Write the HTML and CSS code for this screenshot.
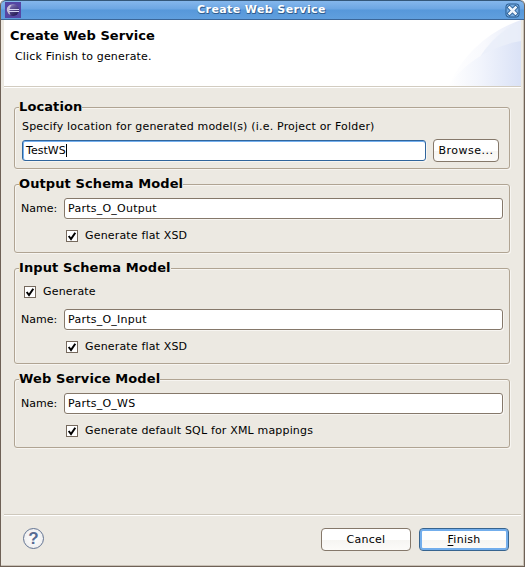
FILE: index.html
```html
<!DOCTYPE html>
<html lang="en">
<head>
<meta charset="utf-8">
<title>Create Web Service</title>
<link rel="stylesheet" href="styles.css">
</head>
<body>
<div class="window">
  <div class="titlebar">
    <svg class="app-icon" width="16" height="16" viewBox="0 0 16 16">
      <defs><linearGradient id="orb" x1="0" y1="0" x2="0.6" y2="1"><stop offset="0" stop-color="#bcb5dc"/><stop offset=".4" stop-color="#65589e"/><stop offset="1" stop-color="#292057"/></linearGradient></defs>
      <rect width="16" height="16" fill="#5546a4"/>
      <circle cx="8" cy="8" r="6" fill="url(#orb)"/>
      <path d="M5 3Q1 5 2 9Q3 12 5.5 13Q3 8 6.5 3Z" fill="#c9bfd6"/>
      <path d="M4 7.5h10M4 9.5h10" stroke="#d5d5f2"/>
    </svg>
    <span class="title">Create Web Service</span>
    <svg class="close" width="15" height="15" viewBox="0 0 15 15">
      <rect x="1" y="1" width="13" height="13" rx="2.5" fill="#76ace2" stroke="#26588d"/>
      <path d="M4.5 4.5l6 6m0-6l-6 6" stroke="#285b91" stroke-width="4.2" stroke-linecap="square"/>
      <path d="M4.5 4.5l6 6m0-6l-6 6" stroke="#eef5fc" stroke-width="2.5" stroke-linecap="square"/>
    </svg>
  </div>
  <div class="header">
    <h1>Create Web Service</h1>
    <p>Click Finish to generate.</p>
    <svg class="swoosh" width="75" height="66" viewBox="0 0 75 66">
      <defs>
        <linearGradient id="s1"><stop offset="0" stop-color="#fff"/><stop offset=".5" stop-color="#f8f9fd"/><stop offset="1" stop-color="#e6ebf9"/></linearGradient>
        <linearGradient id="s2"><stop offset="0" stop-color="#fff"/><stop offset=".45" stop-color="#f1f4fc"/><stop offset="1" stop-color="#dae2f6"/></linearGradient>
      </defs>
      <path d="M2 66Q26 17 75 0V66Z" fill="url(#s1)"/>
      <path d="M32 40Q48 13 75 1V22Q52 26 32 40Z" fill="#e8eef9" fill-opacity=".8"/>
      <path d="M2 66Q29 29 75 21V66Z" fill="url(#s2)"/>
    </svg>
  </div>
  <div class="body">
    <section class="group location">
      <h2>Location</h2>
      <p class="hint">Specify location for generated model(s) (i.e. Project or Folder)</p>
      <div class="picker"><div class="field focused"><span>TestWS</span><i class="caret"></i></div><div class="button browse">Browse...</div></div>
    </section>
    <section class="group output">
      <h2>Output Schema Model</h2>
      <div class="row"><label>Name:</label><div class="field">Parts_O_Output</div></div>
      <div class="check"><svg class="box" width="12" height="12"><rect x=".5" y=".5" width="11" height="11" fill="#fff" stroke="#75695d"/><path d="M2.7 6L5 9 9.3 2.7" fill="none" stroke="#000" stroke-width="2"/></svg><span>Generate flat XSD</span></div>
    </section>
    <section class="group input">
      <h2>Input Schema Model</h2>
      <div class="check outer"><svg class="box" width="12" height="12"><rect x=".5" y=".5" width="11" height="11" fill="#fff" stroke="#75695d"/><path d="M2.7 6L5 9 9.3 2.7" fill="none" stroke="#000" stroke-width="2"/></svg><span>Generate</span></div>
      <div class="row"><label>Name:</label><div class="field">Parts_O_Input</div></div>
      <div class="check"><svg class="box" width="12" height="12"><rect x=".5" y=".5" width="11" height="11" fill="#fff" stroke="#75695d"/><path d="M2.7 6L5 9 9.3 2.7" fill="none" stroke="#000" stroke-width="2"/></svg><span>Generate flat XSD</span></div>
    </section>
    <section class="group service">
      <h2>Web Service Model</h2>
      <div class="row"><label>Name:</label><div class="field">Parts_O_WS</div></div>
      <div class="check"><svg class="box" width="12" height="12"><rect x=".5" y=".5" width="11" height="11" fill="#fff" stroke="#75695d"/><path d="M2.7 6L5 9 9.3 2.7" fill="none" stroke="#000" stroke-width="2"/></svg><span>Generate default SQL for XML mappings</span></div>
    </section>
  </div>
  <div class="footer">
    <div class="help">?</div>
    <div class="button">Cancel</div>
    <div class="button primary"><span><u>F</u>inish</span></div>
  </div>
</div>
</body>
</html>
```

FILE: styles.css
```css
* { box-sizing: border-box; }
body { margin: 0; background: #fff; font: 11px/14px "DejaVu Sans", sans-serif; letter-spacing: .17px; color: #000; }
h1, h2, p { margin: 0; }
.window {
  width: 525px; height: 567px; display: flex; flex-direction: column;
  background: #ece9e2; border: solid #6e6156; border-width: 0 1px 1px;
  border-radius: 5px 5px 0 0; overflow: hidden;
  box-shadow: inset -1px -1px #c9c1b6;
}
.titlebar {
  height: 20px; flex: none; display: flex; align-items: center;
  padding: 0 4px; border-top: 1px solid #345779; border-bottom: 1px solid #3b6698;
  background: linear-gradient(#85b7ec 0, #6ca6e3 8px, #5798da 9px, #609fde 100%);
  border-radius: 5px 5px 0 0;
}
.title {
  flex: 1; text-align: center; color: #fff; font-weight: bold; font-size: 11px; letter-spacing: .4px;
  padding-right: 3px; text-shadow: 1px 1px #315f91, 0 1px #315f91;
}
.header {
  position: relative; height: 68px; flex: none; margin: 0 3px; padding: 8px 6px;
  background: #fff; border-bottom: 1px solid #fff; box-shadow: inset 0 -1px #d2ccc0;
}
.header h1 { font-size: 13px; line-height: 16px; letter-spacing: .07px; }
.header p { margin: 6px 0 0 5px; }
.swoosh { position: absolute; right: 0; top: 0; }
.body { flex: 1; padding: 19px 13px 0; }
.group {
  border: 1px solid #b0a493; border-radius: 3px; margin-bottom: 15px;
  padding: 0 6px 0 7px; box-shadow: 1px 1px #f7f5f1, inset 1px 1px #f7f5f1;
  width: 496px;
}
.location { height: 62px; }
.output { height: 69px; }
.input { height: 96px; }
.service { height: 69px; }
.group h2 {
  width: max-content; height: 16px; margin: -9px 0 0 -3px;
  font-size: 13px; line-height: 16px; letter-spacing: .1px; background: #ece9e2;
}
.hint { margin-top: 5px; height: 14px; letter-spacing: .19px; }
.picker { display: flex; align-items: center; margin-top: 5px; gap: 7px; }
.field {
  flex: 1; height: 21px; display: flex; align-items: center; padding: 0 3px;
  background: #fff; border: 1px solid #85786a; border-radius: 3px;
  box-shadow: 1px 1px #f7f5f1; letter-spacing: .25px;
}
.picker .field { flex: none; width: 404px; letter-spacing: .05px; }
.focused { border: 1px solid #30659c; box-shadow: inset 0 1px #75b0ef, inset 1px 0 #75b0ef, 1px 1px #f7f5f1; }
.caret { width: 1px; height: 13px; background: #000; }
.button {
  width: 90px; height: 23px; display: flex; align-items: center; justify-content: center;
  border: 1px solid #85786a; border-radius: 4px; letter-spacing: .25px;
  background: linear-gradient(#fff 0, #fff 50%, #f6f5f2 51%, #fcfbf9 100%);
}
.browse { width: 66px; letter-spacing: .5px; }
.row { display: flex; align-items: center; margin: 6px 0 0 -1px; }
.row label { width: 43px; letter-spacing: 0; }
.check { display: flex; align-items: center; height: 14px; margin: 10px 0 0 44px; gap: 7px; }
.box { display: block; }
.check.outer { margin: 9px 0 0 2px; }
.outer + .row { margin-top: 10px; }
.footer {
  height: 52px; flex: none; margin: 0 3px; padding: 13px 12px 0 19px; display: flex; gap: 8px;
  border-top: 1px solid #cec8bc; box-shadow: inset 0 1px #fff;
}
.help {
  width: 21px; height: 21px; margin-right: auto; border: 1.5px solid #637493; border-radius: 50%;
  background: radial-gradient(#fff, #e9e9ea); color: #566b93;
  font: bold 17px/19px "Liberation Sans", sans-serif; text-align: center; letter-spacing: 0;
}
.primary { border-color: #37648f; box-shadow: inset 0 0 0 2px #73aeec; }
.primary u { text-underline-offset: 2px; }
```
